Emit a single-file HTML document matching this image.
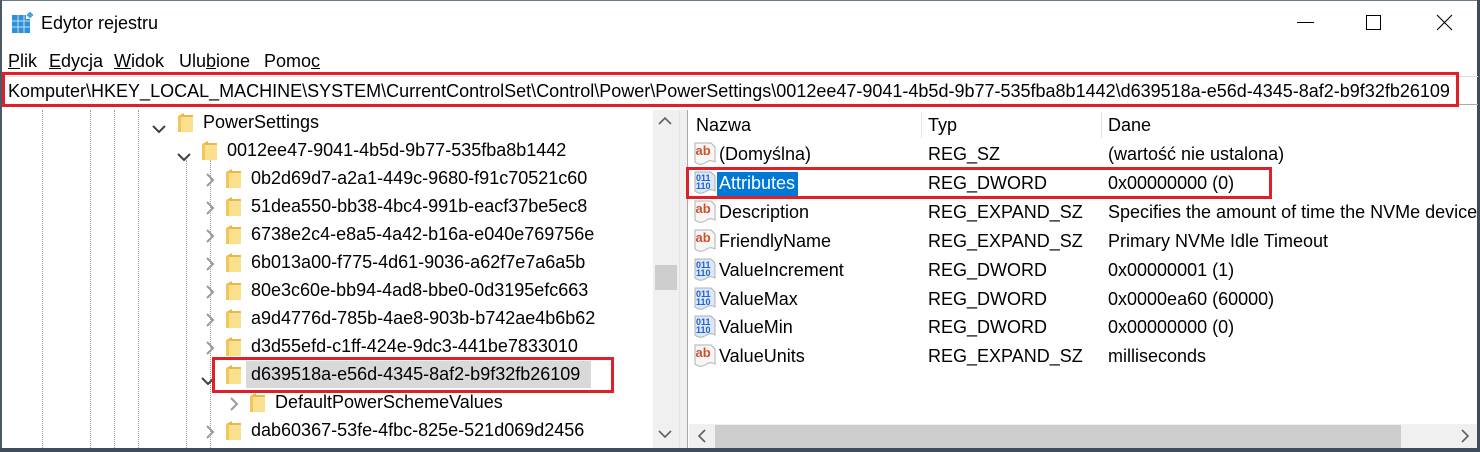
<!DOCTYPE html>
<html><head><meta charset="utf-8"><style>
*{margin:0;padding:0;box-sizing:border-box}
html,body{width:1480px;height:452px;overflow:hidden}
body{background:#fff;font-family:"Liberation Sans",sans-serif;font-size:18px;color:#000;position:relative}
.a{position:absolute;white-space:nowrap}
.dl{position:absolute;width:0;border-left:1px dotted #a0a0a0;top:110px;height:338px}
</style></head><body>
<div class="a" style="left:0;top:0;width:1480px;height:1px;background:#6b7a8a"></div>
<div class="a" style="left:0;top:0;width:2px;height:452px;background:#4a5868"></div>
<div class="a" style="left:1477px;top:0;width:3px;height:452px;background:#3e4c5c"></div>

<svg class="a" style="left:12px;top:11px" width="22" height="22" viewBox="0 0 22 22">
<rect x="0" y="4" width="18" height="18" fill="#2f8fd8"/>
<g stroke="#bfe0f7" stroke-width="1"><line x1="6" y1="4" x2="6" y2="22"/><line x1="12" y1="4" x2="12" y2="22"/><line x1="0" y1="10" x2="18" y2="10"/><line x1="0" y1="16" x2="18" y2="16"/></g>
<rect x="14" y="0" width="8" height="8" fill="#fff"/>
<rect x="15.5" y="1.5" width="5" height="5" fill="#4aa3e0" transform="rotate(45 18 4)"/>
</svg>
<div class="a" style="left:41px;top:13px">Edytor rejestru</div>
<div class="a" style="left:1297px;top:22px;width:17px;height:1px;background:#000"></div>
<div class="a" style="left:1366px;top:15px;width:15px;height:15px;border:1px solid #000"></div>
<svg class="a" style="left:1436px;top:14px" width="17" height="17"><path d="M1 1L16 16M16 1L1 16" stroke="#000" stroke-width="1.1"/></svg>

<div class="a" style="left:8px;top:51px"><u>P</u>lik</div>
<div class="a" style="left:49px;top:51px"><u>E</u>dycja</div>
<div class="a" style="left:114px;top:51px"><u>W</u>idok</div>
<div class="a" style="left:179px;top:51px">Ulu<u>b</u>ione</div>
<div class="a" style="left:264px;top:51px">Pomo<u>c</u></div>

<div class="a" style="left:2px;top:76px;width:1476px;height:29px;border-top:1px solid #ddd;border-bottom:1px solid #aaa"></div>
<div class="a" style="left:8px;top:81px">Komputer\HKEY_LOCAL_MACHINE\SYSTEM\CurrentControlSet\Control\Power\PowerSettings\0012ee47-9041-4b5d-9b77-535fba8b1442\d639518a-e56d-4345-8af2-b9f32fb26109</div>
<div class="a" style="left:2px;top:72px;width:1457px;height:35px;border:3px solid #e02028"></div>

<div class="dl" style="left:42px"></div>
<div class="dl" style="left:90px"></div>
<div class="dl" style="left:114px"></div>
<div class="dl" style="left:138px"></div>
<div class="dl" style="left:186px;top:160px;height:288px"></div>
<div class="dl" style="left:210px;top:160px;height:288px"></div>

<div class="a" style="left:653px;top:110px;width:26px;height:338px;background:#f0f0f0"></div>
<div class="a" style="left:655px;top:265px;width:22px;height:25px;background:#cdcdcd"></div>
<svg class="a" style="left:658px;top:116px" width="14" height="10"><path d="M1 8L7 2L13 8" stroke="#606060" stroke-width="1.6" fill="none"/></svg>
<svg class="a" style="left:658px;top:429px" width="14" height="10"><path d="M1 2L7 8L13 2" stroke="#606060" stroke-width="1.6" fill="none"/></svg>
<div class="a" style="left:679px;top:110px;width:9px;height:338px;background:#f0f0f0;border-right:1px solid #a8a8a8;border-left:1px solid #e4e4e4"></div>

<div class="a" style="left:246px;top:361px;width:345px;height:27px;background:#d9d9d9"></div>

<div id="tree"></div>

<div class="a" style="left:212px;top:357px;width:402px;height:36px;border:3px solid #e02028"></div>

<div class="a" style="left:921px;top:112px;width:1px;height:26px;background:#e5e5e5"></div>
<div class="a" style="left:1101px;top:112px;width:1px;height:26px;background:#e5e5e5"></div>
<div class="a" style="left:696px;top:115px">Nazwa</div>
<div class="a" style="left:928px;top:115px">Typ</div>
<div class="a" style="left:1108px;top:115px">Dane</div>
<div id="vals"></div>
<div class="a" style="left:686px;top:167px;width:586px;height:32px;border:3px solid #e02028"></div>

<div class="a" style="left:689px;top:424px;width:788px;height:24px;background:#f0f0f0"></div>
<div class="a" style="left:715px;top:425px;width:686px;height:23px;background:#cdcdcd"></div>
<svg class="a" style="left:697px;top:429px" width="10" height="14"><path d="M8 1L2 7L8 13" stroke="#606060" stroke-width="1.6" fill="none"/></svg>
<svg class="a" style="left:1460px;top:429px" width="10" height="14"><path d="M2 1L8 7L2 13" stroke="#606060" stroke-width="1.6" fill="none"/></svg>

<div class="a" style="left:0;top:448px;width:1480px;height:4px;background:#3e4c5c"></div>

<script>
var folder='<svg width="15" height="19" viewBox="0 0 15 19"><path d="M0 3L6 0L6 2L15 2L15 19L0 19Z" fill="#e8b84a"/><path d="M2 4L15 4L15 19L2 19Z" fill="#fbe08e"/><path d="M0 3L3 3L3 19L0 19Z" fill="#f2c75a"/></svg>';
var down='<svg width="14" height="10"><path d="M1 2L7 8L13 2" stroke="#404040" stroke-width="2" fill="none"/></svg>';
var right='<svg width="10" height="14"><path d="M2 1L8 7L2 13" stroke="#9a9a9a" stroke-width="2" fill="none"/></svg>';
var rows=[
[159,178,'PowerSettings',1,114],
[184,202,'0012ee47-9041-4b5d-9b77-535fba8b1442',1,142],
[208,226,'0b2d69d7-a2a1-449c-9680-f91c70521c60',0,170],
[208,226,'51dea550-bb38-4bc4-991b-eacf37be5ec8',0,198],
[208,226,'6738e2c4-e8a5-4a42-b16a-e040e769756e',0,226],
[208,226,'6b013a00-f775-4d61-9036-a62f7e7a6a5b',0,254],
[208,226,'80e3c60e-bb94-4ad8-bbe0-0d3195efc663',0,282],
[208,226,'a9d4776d-785b-4ae8-903b-b742ae4b6b62',0,310],
[208,226,'d3d55efd-c1ff-424e-9dc3-441be7833010',0,338],
[208,226,'d639518a-e56d-4345-8af2-b9f32fb26109',1,366],
[232,250,'DefaultPowerSchemeValues',0,394],
[208,226,'dab60367-53fe-4fbc-825e-521d069d2456',0,422]];
var h='';
rows.forEach(function(r){var cx=r[0],fx=r[1],t=r[2],o=r[3],y=r[4];
h+='<div class="a" style="left:'+(o?cx-7:cx-3)+'px;top:'+(y+(o?4:1))+'px">'+(o?down:right)+'</div>';
h+='<div class="a" style="left:'+fx+'px;top:'+(y-1)+'px">'+folder+'</div>';
h+='<div class="a" style="left:'+(fx+25)+'px;top:'+(y-2)+'px">'+t+'</div>';});
document.getElementById('tree').innerHTML=h;
var ab='<svg width="24" height="24" viewBox="0 0 24 24"><path d="M2 1L18 1L22 5L22 20Q17 17 12 21Q7 24 2 20Z" fill="#f6f6f6" stroke="#b0b0b0"/><text x="2.5" y="13" font-family="Liberation Sans" font-weight="bold" font-size="13" fill="#d0502c">ab</text></svg>';
var bin='<svg width="24" height="24" viewBox="0 0 24 24"><path d="M2 1L18 1L22 5L22 20Q17 17 12 21Q7 24 2 20Z" fill="#dce8f8" stroke="#b0b0b0"/><text x="3" y="10" font-family="Liberation Sans" font-weight="bold" font-size="9" fill="#1f5fd0">011</text><text x="3" y="18" font-family="Liberation Sans" font-weight="bold" font-size="9" fill="#1f5fd0">110</text></svg>';
var v=[[ab,'(Domyślna)','REG_SZ','(wartość nie ustalona)'],[bin,'Attributes','REG_DWORD','0x00000000 (0)'],[ab,'Description','REG_EXPAND_SZ','Specifies the amount of time the NVMe device'],[ab,'FriendlyName','REG_EXPAND_SZ','Primary NVMe Idle Timeout'],[bin,'ValueIncrement','REG_DWORD','0x00000001 (1)'],[bin,'ValueMax','REG_DWORD','0x0000ea60 (60000)'],[bin,'ValueMin','REG_DWORD','0x00000000 (0)'],[ab,'ValueUnits','REG_EXPAND_SZ','milliseconds']];
h='';
v.forEach(function(r,i){var y=144+i*28.9;
h+='<div class="a" style="left:693px;top:'+(y-2)+'px">'+r[0]+'</div>';
if(i==1)h+='<div class="a" style="left:717px;top:'+(y-1)+'px;width:81px;height:24px;background:#0078d7"></div>';
h+='<div class="a" style="left:719px;top:'+y+'px;'+(i==1?'color:#fff':'')+'">'+r[1]+'</div>';
h+='<div class="a" style="left:928px;top:'+y+'px">'+r[2]+'</div>';
h+='<div class="a" style="left:1108px;top:'+y+'px">'+r[3]+'</div>';});
document.getElementById('vals').innerHTML=h;
</script>
</body></html>
